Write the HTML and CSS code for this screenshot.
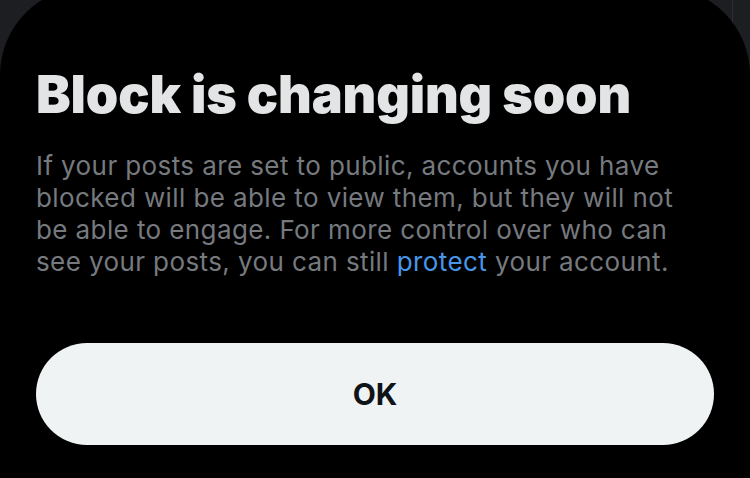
FILE: index.html
```html
<!DOCTYPE html>
<html lang="en">
<head>
<meta charset="utf-8">
<title>Block is changing soon</title>
<link rel="stylesheet" href="styles.css">
</head>
<body>
<div class="backdrop-line"></div>
<section class="sheet">
  <h1 class="title">Block is changing soon</h1>
  <p class="body">If your posts are set to public, accounts you have<br>blocked will be able to view them, but they will not<br>be able to engage. For more control over who can<br>see your posts, you can still <a class="link" href="#">protect</a> your account.</p>
  <button class="ok" type="button">OK</button>
</section>
</body>
</html>
```

FILE: styles.css
```css
* { box-sizing: border-box; }
html, body {
  margin: 0;
  padding: 0;
  width: 750px;
  height: 478px;
  overflow: hidden;
  background: #1d1e21;
}
body {
  position: relative;
  font-family: "Inter", "Liberation Sans", sans-serif;
}
.backdrop-line {
  position: absolute;
  left: 732px;
  top: 0;
  width: 1px;
  height: 30px;
  background: #2c2d31;
}
.sheet {
  position: relative;
  margin-top: -13px;
  height: 500px;
  background: #000;
  border-radius: 88px 88px 0 0;
  padding: 78px 36px 0 36px;
  display: flex;
  flex-direction: column;
}
.title {
  margin: 0;
  font-size: 52px;
  line-height: 60px;
  font-weight: 900;
  color: #e2e4e5;
  letter-spacing: -0.15px;
}
.body {
  margin: 25px 0 0 0;
  font-size: 26px;
  line-height: 32px;
  font-weight: 400;
  color: #767a7f;
  letter-spacing: 0.4px;
  white-space: nowrap;
}
.link {
  color: #4896e8;
  text-decoration: none;
}
.ok {
  margin-top: 65px;
  width: 678px;
  height: 102px;
  border: none;
  border-radius: 51px;
  background: #eff3f4;
  color: #0f1419;
  font-family: "Inter", "Liberation Sans", sans-serif;
  font-weight: 700;
  font-size: 30px;
  padding: 0;
}
```
